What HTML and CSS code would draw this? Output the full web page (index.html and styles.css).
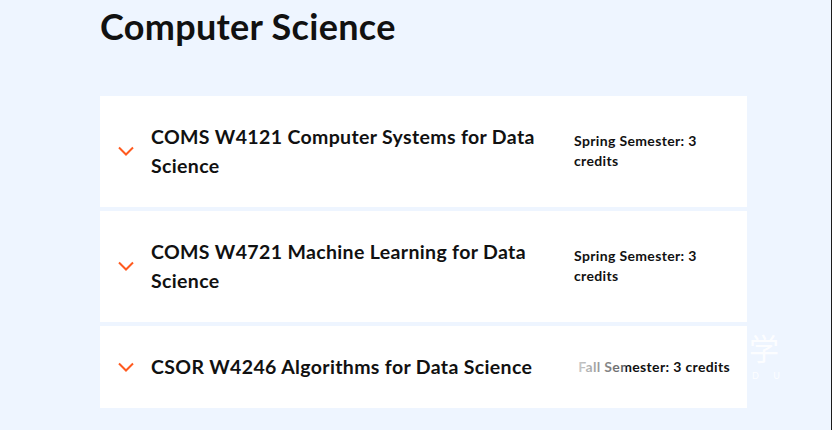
FILE: index.html
```html
<!DOCTYPE html>
<html>
  <head>
    <meta charset="UTF-8" />
    <title>Computer Science</title>
    <link rel="stylesheet" href="styles.css">
  </head>
  <body>
    <div class="page">
      <div class="section">
        <h2 class="section-title">Computer Science</h2>
        <div class="course-list">
          <div class="course">
            <svg class="chevron" width="16" height="10" viewBox="0 0 16 10">
              <path d="M1 1.5 L8 8.5 L15 1.5" fill="none" stroke="#ff5a1f" stroke-width="2" />
            </svg>
            <div class="course-name">COMS W4121 Computer Systems for Data Science</div>
            <div class="course-credits">Spring Semester: 3 credits</div>
          </div>
          <div class="course">
            <svg class="chevron" width="16" height="10" viewBox="0 0 16 10">
              <path d="M1 1.5 L8 8.5 L15 1.5" fill="none" stroke="#ff5a1f" stroke-width="2" />
            </svg>
            <div class="course-name">COMS W4721 Machine Learning for Data Science</div>
            <div class="course-credits">Spring Semester: 3 credits</div>
          </div>
          <div class="course">
            <svg class="chevron" width="16" height="10" viewBox="0 0 16 10">
              <path d="M1 1.5 L8 8.5 L15 1.5" fill="none" stroke="#ff5a1f" stroke-width="2" />
            </svg>
            <div class="course-name">CSOR W4246 Algorithms for Data Science</div>
            <div class="course-credits credits-last">Fall Semester: 3 credits</div>
          </div>
        </div>
      </div>
      <div class="wm-fade"></div>
      <div class="watermark">
        <div class="wm-char">学</div>
        <div class="wm-sub">D U</div>
      </div>
    </div>
  </body>
</html>
```

FILE: styles.css
```css
* {
  box-sizing: border-box;
}

body {
  margin: 0;
  background: #eef5ff;
  font-family: Lato, "Noto Sans", sans-serif;
  color: #111;
}

.page {
  position: relative;
  height: 430px;
  overflow: hidden;
  border-right: 1px solid #1c1c1c;
}

.section {
  width: 647px;
  margin-left: 100px;
}

.section-title {
  margin: 0;
  padding-top: 4px;
  height: 96px;
  font-size: 36px;
  font-weight: 700;
  line-height: 44px;
  letter-spacing: 0.3px;
}

.course-list {
  display: flex;
  flex-direction: column;
  gap: 4px;
}

.course {
  display: flex;
  align-items: center;
  background: #fff;
  padding: 26px 17px 27px 18px;
}

.chevron {
  flex: none;
  margin-right: 17px;
}

.course-name {
  flex: 1;
  font-size: 19.5px;
  font-weight: 700;
  line-height: 29px;
  letter-spacing: 0.35px;
  padding-right: 28px;
}

.course-credits {
  flex: none;
  width: 156px;
  font-size: 14px;
  font-weight: 700;
  line-height: 20px;
  letter-spacing: 0.35px;
}

.credits-last {
  width: auto;
  white-space: nowrap;
}

.wm-fade {
  position: absolute;
  left: 576px;
  top: 356px;
  width: 50px;
  height: 20px;
  background: linear-gradient(90deg, rgba(255, 255, 255, 0.8), rgba(255, 255, 255, 0.3));
}

.watermark {
  position: absolute;
  left: 746px;
  top: 330px;
  width: 36px;
  text-align: center;
  color: rgba(255, 255, 255, 0.9);
}

.wm-char {
  font-family: "Noto Sans CJK SC", sans-serif;
  font-size: 30px;
  line-height: 34px;
}

.wm-sub {
  margin-top: 6px;
  font-size: 9px;
  letter-spacing: 6px;
  padding-left: 6px;
  white-space: nowrap;
}
```
